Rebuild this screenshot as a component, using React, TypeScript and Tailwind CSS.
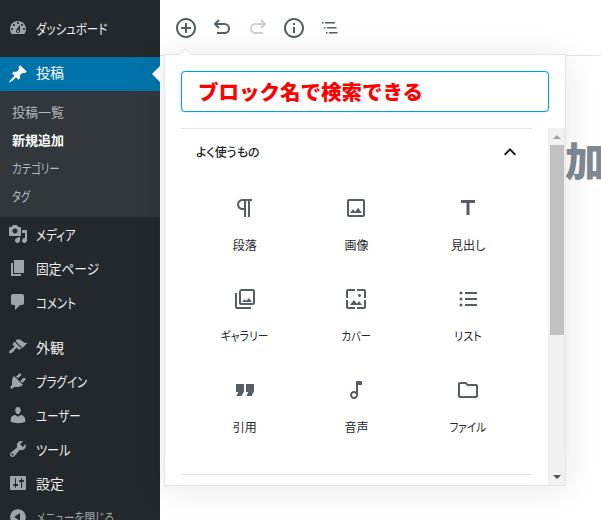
const font = "font-['Noto_Sans_CJK_JP','Noto_Sans',sans-serif] [font-feature-settings:'palt']"
const narrow = "inline-block origin-left scale-x-[0.82]"

const dash = {
  dashboard: "M3.76 16h12.48c1.1-1.37 1.76-3.11 1.76-5 0-4.42-3.58-8-8-8s-8 3.58-8 8c0 1.89.66 3.63 1.76 5zM10 4c.55 0 1 .45 1 1s-.45 1-1 1-1-.45-1-1 .45-1 1-1zM6 6c.55 0 1 .45 1 1s-.45 1-1 1-1-.45-1-1 .45-1 1-1zm8 0c.55 0 1 .45 1 1s-.45 1-1 1-1-.45-1-1 .45-1 1-1zm-5.37 5.55L12 7v6c0 1.1-.9 2-2 2s-2-.9-2-2c0-.57.24-1.08.63-1.45zM4 10c.55 0 1 .45 1 1s-.45 1-1 1-1-.45-1-1 .45-1 1-1zm12 0c.55 0 1 .45 1 1s-.45 1-1 1-1-.45-1-1 .45-1 1-1zm-5 3c0-.55-.45-1-1-1s-1 .45-1 1 .45 1 1 1 1-.45 1-1z",
  pin: "M10.44 3.02l1.82-1.82 6.36 6.35-1.83 1.82c-1.05-.68-2.48-.57-3.41.36l-.75.75c-.92.93-1.04 2.35-.35 3.41l-1.83 1.82-2.41-2.41-2.8 2.79c-.42.42-3.38 2.71-3.8 2.29s1.86-3.39 2.28-3.81l2.79-2.79L4.1 9.36l1.83-1.82c1.05.69 2.48.57 3.4-.36l.75-.75c.93-.92 1.05-2.35.36-3.41z",
  media: "M13 11V4c0-.55-.45-1-1-1h-1.67L9 1H5L3.67 3H2c-.55 0-1 .45-1 1v7c0 .55.45 1 1 1h10c.55 0 1-.45 1-1zM7 4.5c1.38 0 2.5 1.12 2.5 2.5S8.38 9.5 7 9.5 4.5 8.38 4.5 7 5.62 4.5 7 4.5zM14 6h5v10.5c0 1.38-1.12 2.5-2.5 2.5S14 17.88 14 16.5s1.12-2.5 2.5-2.5c.17 0 .34.02.5.05V9h-3V6zm-4 8.05V13h2v3.5c0 1.38-1.12 2.5-2.5 2.5S7 17.88 7 16.5 8.12 14 9.5 14c.17 0 .34.02.5.05z",
  page: "M6 15V2h10v13H6zm-1 1h8v2H3V5h2v11z",
  comments: "M5 2h9c1.1 0 2 .9 2 2v7c0 1.1-.9 2-2 2h-2l-5 5v-5H5c-1.1 0-2-.9-2-2V4c0-1.1.9-2 2-2z",
  appearance: "M14.48 11.06L7.41 3.99l1.5-1.5c.5-.56 2.3-.47 3.51.32 1.21.8 1.43 1.28 2.91 2.1 1.18.64 2.45 1.26 4.45.85zm-.71.71L6.7 4.7 4.93 6.47c-.39.39-.39 1.02 0 1.41l1.06 1.06c.39.39.39 1.03 0 1.42-.6.6-1.43 1.11-2.21 1.69-.35.26-.7.53-1.01.84C1.43 13.23.4 14.89 1.4 15.89s2.66.03 4.01-1.37c.3-.31.58-.66.84-1.02.57-.78 1.08-1.61 1.69-2.21.39-.39 1.02-.39 1.41 0l1.06 1.06c.39.39 1.02.39 1.41 0z",
  plugins: "M13.11 4.36L9.87 7.6 8 5.73l3.24-3.24c.35-.34 1.05-.2 1.56.32.52.51.66 1.21.31 1.55zm-8 1.77l.91-1.12 9.01 9.01-1.19.84c-.71.71-2.63 1.16-3.82 1.16H6.14L4.9 17.26c-.59.59-1.54.59-2.12 0-.59-.58-.59-1.53 0-2.12l1.24-1.24v-3.88c0-1.13.4-3.19 1.09-3.89zm7.26 3.97l3.24-3.24c.34-.35 1.04-.21 1.55.31.52.51.66 1.21.31 1.55l-3.24 3.25z",
  users: "M10 9.25c-2.27 0-2.73-3.44-2.73-3.44C7 4.02 7.82 2 9.97 2c2.16 0 2.98 2.02 2.71 3.81 0 0-.41 3.44-2.68 3.44zm0 2.57L12.72 10c2.39 0 4.52 2.33 4.52 4.53v2.49s-3.65 1.13-7.24 1.13c-3.65 0-7.24-1.13-7.24-1.13v-2.49c0-2.25 1.94-4.48 4.47-4.48z",
  tools: "M16.68 9.77c-1.34 1.34-3.3 1.67-4.95.99l-5.41 6.52c-.99.99-2.59.99-3.58 0s-.99-2.59 0-3.57l6.52-5.42c-.68-1.65-.35-3.61.99-4.95 1.28-1.28 3.12-1.62 4.72-1.06l-2.89 2.89 2.82 2.82 2.86-2.87c.53 1.58.18 3.39-1.08 4.65zM3.81 16.21c.4.39 1.04.39 1.43 0 .4-.4.4-1.04 0-1.43-.39-.4-1.03-.4-1.43 0-.39.39-.39 1.03 0 1.43z",
  settings: "M18 16V4c0-.55-.45-1-1-1H3c-.55 0-1 .45-1 1v12c0 .55.45 1 1 1h14c.55 0 1-.45 1-1zM8 11h1c.55 0 1 .45 1 1s-.45 1-1 1H8v1.5c0 .28-.22.5-.5.5s-.5-.22-.5-.5V13H6c-.55 0-1-.45-1-1s.45-1 1-1h1V5.5c0-.28.22-.5.5-.5s.5.22.5.5V11zm5-2h-1c-.55 0-1-.45-1-1s.45-1 1-1h1V5.5c0-.28.22-.5.5-.5s.5.22.5.5V7h1c.55 0 1 .45 1 1s-.45 1-1 1h-1v5.5c0 .28-.22.5-.5.5s-.5-.22-.5-.5V9z",
  collapse: "M10 2.160c4.330 0 7.840 3.510 7.840 7.840s-3.510 7.840-7.840 7.840S2.160 14.330 2.160 10 5.710 2.160 10 2.160zm2 11.720V6.120L6.180 9.970z",
}

const blocks = [
  { label: "段落", cls: "", d: "M11 5v7H9.5C7.6 12 6 10.4 6 8.5S7.6 5 9.5 5H11m8-2H9.5C6.5 3 4 5.5 4 8.5S6.5 14 9.5 14H11v7h2V5h2v16h2V5h2V3z" },
  { label: "画像", cls: "", d: "M19 5v14H5V5h14m0-2H5c-1.1 0-2 .9-2 2v14c0 1.1.9 2 2 2h14c1.1 0 2-.9 2-2V5c0-1.1-.9-2-2-2zM14.14 11.86l-3 3.87L9 13.14 6 17h12l-3.86-5.14z" },
  { label: "見出し", cls: "", d: "M5 4v3h5.5v12h3V7H19V4z" },
  { label: "ギャラリー", cls: "scale-x-[0.9]", d: "M20 4v12H8V4h12m0-2H8L6 3.99V16c0 1.1.9 2 2 2h12c1.1 0 2-.9 2-2V4c0-1.1-.9-2-2-2zM12 12l1 2 3-3 3 4H9zM2 6v14c0 1.1.9 2 2 2h14v-2H4V6H2z" },
  { label: "カバー", cls: "scale-x-[0.86]", d: "M4 4h7V2H4c-1.1 0-2 .9-2 2v7h2V4zm6 9l-4 5h12l-3-4-2.03 2.71L10 13zm7-4.5c0-.83-.67-1.5-1.5-1.5S14 7.67 14 8.5s.67 1.5 1.5 1.5S17 9.33 17 8.5zM20 2h-7v2h7v7h2V4c0-1.1-.9-2-2-2zm0 18h-7v2h7c1.1 0 2-.9 2-2v-7h-2v7zM4 13H2v7c0 1.1.9 2 2 2h7v-2H4v-7z" },
  { label: "リスト", cls: "scale-x-[0.93]", d: "M9 19h12v-2H9v2zm0-6h12v-2H9v2zm0-8v2h12V5H9zM5 4.5a1.5 1.5 0 1 0 0 3 1.5 1.5 0 0 0 0-3zm0 6a1.5 1.5 0 1 0 0 3 1.5 1.5 0 0 0 0-3zm0 6a1.5 1.5 0 1 0 0 3 1.5 1.5 0 0 0 0-3z" },
  { label: "引用", cls: "", d: "M18.62 18h-5.24l2-4H13V6h8v7.24L18.62 18zM8.62 18H3.38l2-4H3V6h8v7.24L8.62 18z" },
  { label: "音声", cls: "", d: "M12 3v10.55c-.59-.34-1.27-.55-2-.55-2.21 0-4 1.79-4 4s1.79 4 4 4 4-1.79 4-4V7h4V3h-6zm-2 16c-1.1 0-2-.9-2-2s.9-2 2-2 2 .9 2 2-.9 2-2 2z" },
  { label: "ファイル", cls: "scale-x-[0.88]", d: "M9.17 6l2 2H20v10H4V6h5.17M10 4H4c-1.1 0-1.99.9-1.99 2L2 18c0 1.1.9 2 2 2h16c1.1 0 2-.9 2-2V8c0-1.1-.9-2-2-2h-8l-2-2z" },
]

function MenuItem({ icon, label, cls = narrow }: { icon: string; label: string; cls?: string }) {
  return (
    <div className="flex h-[34px] items-center">
      <svg viewBox="0 0 20 20" className="ml-[8px] h-5 w-5 shrink-0 fill-[#a0a5aa]">
        <path d={icon} />
      </svg>
      <span className={`ml-[8px] whitespace-nowrap text-[14px] text-[#eeeeee] ${cls}`}>{label}</span>
    </div>
  )
}

function Sidebar() {
  return (
    <aside className={`${font} h-[520px] w-[160px] shrink-0 overflow-hidden bg-[#23282d] pt-[11px]`}>
      <MenuItem icon={dash.dashboard} label="ダッシュボード" />
      <div className="relative mt-[12px] flex h-[34px] items-center bg-[#0073aa]">
        <svg viewBox="0 0 20 20" className="ml-[8px] h-5 w-5 fill-white">
          <path d={dash.pin} />
        </svg>
        <span className="ml-[8px] pb-[3px] text-[14px] text-white">投稿</span>
        <div className="absolute right-0 top-[9px] border-y-[8px] border-r-[8px] border-y-transparent border-r-white" />
      </div>
      <div className="flex flex-col bg-[#32373c] py-[7px] pl-[12px] text-[13px] text-[#b4b9be]">
        <div className="flex h-[28px] items-center pb-[1px]">投稿一覧</div>
        <div className="flex h-[28px] items-center pb-[1px] font-bold text-white">新規追加</div>
        <div className="flex h-[28px] items-center pb-[1px]"><span className="inline-block origin-left scale-x-[0.8]">カテゴリー</span></div>
        <div className="flex h-[28px] items-center pb-[1px]"><span className="inline-block origin-left scale-x-[0.78]">タグ</span></div>
      </div>
      <MenuItem icon={dash.media} label="メディア" />
      <MenuItem icon={dash.page} label="固定ページ" cls="inline-block origin-left scale-x-[0.91]" />
      <MenuItem icon={dash.comments} label="コメント" />
      <div className="h-[11px]" />
      <MenuItem icon={dash.appearance} label="外観" cls="" />
      <MenuItem icon={dash.plugins} label="プラグイン" />
      <MenuItem icon={dash.users} label="ユーザー" />
      <MenuItem icon={dash.tools} label="ツール" cls="inline-block origin-left scale-x-[0.87]" />
      <MenuItem icon={dash.settings} label="設定" cls="" />
      <div className="flex h-[34px] items-center">
        <svg viewBox="0 0 20 20" className="ml-[8px] h-5 w-5 shrink-0 fill-[#a0a5aa]">
          <path d={dash.collapse} />
        </svg>
        <span className={`ml-[8px] whitespace-nowrap text-[13px] text-[#a0a5aa] ${narrow}`}>メニューを閉じる</span>
      </div>
    </aside>
  )
}

function Toolbar() {
  return (
    <div className="flex h-[56px] items-center gap-[12px] border-b border-[#e2e4e7] bg-white pl-[14px]">
      <svg viewBox="0 0 24 24" className="h-6 w-6 fill-[#555d66]">
        <path d="M13 7h-2v4H7v2h4v4h2v-4h4v-2h-4V7zm-1-5C6.48 2 2 6.48 2 12s4.48 10 10 10 10-4.48 10-10S17.52 2 12 2zm0 18c-4.41 0-8-3.59-8-8s3.59-8 8-8 8 3.59 8 8-3.59 8-8 8z" />
      </svg>
      <svg viewBox="0 0 24 24" className="h-6 w-6 fill-none stroke-[#555d66] stroke-2">
        <path d="M9 4 5 8l4 4M5 8h9.500a4.500 4.500 0 0 1 0 9H7" />
      </svg>
      <svg viewBox="0 0 24 24" className="h-6 w-6 fill-none stroke-[#ccd0d4] stroke-2">
        <path d="m15 4 4 4-4 4M19 8H9.500a4.500 4.500 0 0 0 0 9H17" />
      </svg>
      <svg viewBox="0 0 24 24" className="h-6 w-6 fill-[#555d66]">
        <path d="M11 7h2v2h-2zm0 4h2v6h-2zm1-9C6.48 2 2 6.48 2 12s4.48 10 10 10 10-4.48 10-10S17.52 2 12 2zm0 18c-4.41 0-8-3.59-8-8s3.59-8 8-8 8 3.59 8 8-3.59 8-8 8z" />
      </svg>
      <svg viewBox="0 0 24 24" className="h-6 w-6 fill-[#555d66]">
        <path d="M4 6h1.500v1.500H4zM7 6h10v1.500H7zM6 11h1.500v1.500H6zM9 11h9.500v1.500H9zM8 16h1.500v1.500H8zM11 16h8.500v1.500H11z" />
      </svg>
    </div>
  )
}

function BlockItem({ label, d, cls }: { label: string; d: string; cls: string }) {
  return (
    <div className="flex h-[91px] flex-col items-center pt-[21px]">
      <svg viewBox="0 0 24 24" className="h-6 w-6 fill-[#555d66]">
        <path d={d} />
      </svg>
      <span className={`mt-[16px] inline-block whitespace-nowrap text-[12px] text-[#23282d] ${cls}`}>{label}</span>
    </div>
  )
}

function Scrollbar() {
  return (
    <div className="flex w-[17px] shrink-0 flex-col bg-[#f1f1f1]">
      <div className="flex h-[17px] items-center justify-center">
        <div className="border-x-[4px] border-b-[4px] border-x-transparent border-b-[#a3a3a3]" />
      </div>
      <div className="mx-auto h-[190px] w-[14px] bg-[#c1c1c1]" />
      <div className="flex-1" />
      <div className="flex h-[17px] items-center justify-center">
        <div className="border-x-[4px] border-t-[4px] border-x-transparent border-t-[#505050]" />
      </div>
    </div>
  )
}

function Inserter() {
  return (
    <div className="absolute left-[4px] top-[54px] flex h-[432px] w-[402px] flex-col border border-[#e2e4e7] bg-white shadow-[0_3px_30px_rgba(25,30,35,0.1)]">
      <div className="absolute left-[16px] top-[-5px] h-[9px] w-[9px] rotate-45 border-l border-t border-[#e2e4e7] bg-white" />
      <div className="relative mx-[16px] mt-[16px] flex h-[41px] items-center rounded border border-[#00a0d2] pl-[16px] text-[20.5px] font-black leading-none text-[#ff0000] shadow-[0_0_1px_#00a0d2] [font-feature-settings:normal]">
        ブロック名で検索できる
      </div>
      <div className="mt-[16px] flex min-h-0 flex-1">
        <div className="ml-[16px] mr-[16px] flex min-w-0 flex-1 flex-col">
          <div className="border-t border-[#e2e4e7]" />
          <div className="flex h-[46px] items-center justify-between pl-[15px] pr-[10px]">
            <span className="text-[12px] font-medium text-[#191e23]">よく使うもの</span>
            <svg viewBox="0 0 24 24" className="h-6 w-6 fill-[#191e23]">
              <path d="M12 8l-6 6 1.41 1.41L12 10.83l4.59 4.58L18 14z" />
            </svg>
          </div>
          <div className="grid grid-cols-3 px-[8px]">
            {blocks.map((b) => (
              <BlockItem key={b.label} label={b.label} d={b.d} cls={b.cls} />
            ))}
          </div>
          <div className="mt-[26px] border-t border-[#e2e4e7]" />
        </div>
        <Scrollbar />
      </div>
    </div>
  )
}

export default function App() {
  return (
    <div className={`${font} flex h-[520px] w-[601px] overflow-hidden bg-white`}>
      <Sidebar />
      <main className="relative min-w-0 flex-1">
        <Toolbar />
        <h1 className="absolute left-[405px] top-[129px] text-[40px] font-black leading-[60px] text-[#7e8993]">加</h1>
        <Inserter />
      </main>
    </div>
  )
}
